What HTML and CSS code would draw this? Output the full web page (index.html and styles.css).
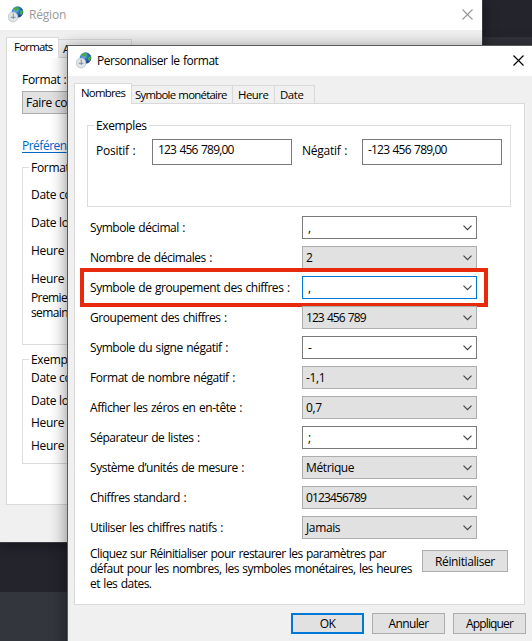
FILE: index.html
```html
<!DOCTYPE html>
<html lang="fr">
<head>
<meta charset="utf-8">
<title>Région</title>
<link rel="stylesheet" href="styles.css">
</head>
<body>
<svg class="defs" width="0" height="0">
  <defs>
    <radialGradient id="sea" cx="35%" cy="30%" r="75%"><stop offset="0" stop-color="#8fd0f5"/><stop offset=".45" stop-color="#2f74d0"/><stop offset="1" stop-color="#0c2f8c"/></radialGradient>
    <symbol id="globe" viewBox="0 0 16 17">
      <circle cx="9.5" cy="6" r="5.8" fill="url(#sea)"/>
      <path d="M5.500 2.500Q8 .2 10 1L11 2.500 9 4.500 7.500 5 6 4ZM12.500 4.500L15 4.200Q15.500 7.500 13.200 9.800L11.800 7.500Z" fill="#43ad3d"/>
      <circle cx="5" cy="11" r="4.900" fill="#dfe5e8" stroke="#b4bdc3" stroke-width=".7"/>
      <path d="M5.300 7.500V13M2.700 11.300H7.500" fill="none" stroke="#7b8790" stroke-width=".9"/>
    </symbol>
    <symbol id="cross" viewBox="0 0 11 11"><path d="M.5 .5L10.500 10.500M10.500 .5L.5 10.500" fill="none" stroke="currentColor" stroke-width="1.150"/></symbol>
    <symbol id="chev" viewBox="0 0 9 6"><path d="M.5 .7L4.500 4.700 8.500 .7" fill="none" stroke="currentColor" stroke-width="1.200"/></symbol>
  </defs>
</svg>
<main class="desktop">
  <section class="window region">
    <header class="titlebar"><svg class="app-icon"><use href="#globe"/></svg><span class="title">Région</span><svg class="close"><use href="#cross"/></svg></header>
    <nav class="tabs"><span class="tab active">Formats</span><span class="tab">Administration</span></nav>
    <div class="panel">
      <div class="caption">Format :</div>
      <div class="select-back">Faire co</div>
      <a class="link">Préféren</a>
      <div class="group formats">
        <div class="legend">Format</div>
        <p>Date co</p><p>Date lo</p><p>Heure c</p><p>Heure l</p>
        <p class="two">Premie<br>semain</p>
      </div>
      <div class="group samples">
        <div class="legend">Exemp</div>
        <p>Date co</p><p>Date lo</p><p>Heure c</p><p>Heure l</p>
      </div>
    </div>
  </section>

  <section class="window customize">
    <header class="titlebar"><svg class="app-icon"><use href="#globe"/></svg><span class="title">Personnaliser le format</span><svg class="close"><use href="#cross"/></svg></header>
    <nav class="tabs"><span class="tab active">Nombres</span><span class="tab wide">Symbole monétaire</span><span class="tab hour">Heure</span><span class="tab date">Date</span></nav>
    <div class="panel">
      <div class="group examples">
        <div class="legend">Exemples</div>
        <div class="fields"><span class="lab pos">Positif :</span><span class="field">123 456 789,00</span><span class="lab neg">Négatif :</span><span class="field">-123 456 789,00</span></div>
      </div>
      <div class="rows">
        <div class="row"><span>Symbole décimal :</span><div class="combo edit"><b>,</b><svg><use href="#chev"/></svg></div></div>
        <div class="row"><span>Nombre de décimales :</span><div class="combo"><b>2</b><svg><use href="#chev"/></svg></div></div>
        <div class="row marked"><span>Symbole de groupement des chiffres :</span><div class="combo edit focus"><b>,</b><svg><use href="#chev"/></svg></div></div>
        <div class="row"><span>Groupement des chiffres :</span><div class="combo"><b class="num">123 456 789</b><svg><use href="#chev"/></svg></div></div>
        <div class="row"><span>Symbole du signe négatif :</span><div class="combo edit"><b>-</b><svg><use href="#chev"/></svg></div></div>
        <div class="row"><span>Format de nombre négatif :</span><div class="combo"><b>-1,1</b><svg><use href="#chev"/></svg></div></div>
        <div class="row"><span>Afficher les zéros en en-tête :</span><div class="combo"><b>0,7</b><svg><use href="#chev"/></svg></div></div>
        <div class="row"><span>Séparateur de listes :</span><div class="combo edit"><b>;</b><svg><use href="#chev"/></svg></div></div>
        <div class="row"><span>Système d’unités de mesure :</span><div class="combo"><b>Métrique</b><svg><use href="#chev"/></svg></div></div>
        <div class="row"><span>Chiffres standard :</span><div class="combo"><b class="digits">0123456789</b><svg><use href="#chev"/></svg></div></div>
        <div class="row"><span>Utiliser les chiffres natifs :</span><div class="combo"><b>Jamais</b><svg><use href="#chev"/></svg></div></div>
      </div>
      <div class="reset"><div><p class="first">Cliquez sur Réinitialiser pour restaurer les paramètres par</p><p>défaut pour les nombres, les symboles monétaires, les heures</p><p>et les dates.</p></div><div class="button">Réinitialiser</div></div>
    </div>
    <footer class="actions"><div class="button default">OK</div><div class="button">Annuler</div><div class="button">Appliquer</div></footer>
  </section>
</main>
</body>
</html>
```
FILE: styles.css
```css
*, *::after { box-sizing: border-box; }
body { margin: 0; font: 12px/15px "Open Sans", "Noto Sans", sans-serif; letter-spacing: -0.37px; word-spacing: 0.8px; color: #000; }
p { margin: 0; }
b { font-weight: 400; }
.defs { position: absolute; }
.desktop { position: relative; width: 532px; height: 641px; overflow: hidden; background: linear-gradient(#24242d 37px, #32333a 37px 80px, #24242d 80px 592px, #33363d 592px); white-space: nowrap; }
.window { position: absolute; background: #f0f0f0; }
.region { left: 0; top: 0; width: 483px; height: 543px; border-right: 1px solid #3b3c42; border-bottom: 1px solid #3b3c42; box-shadow: 0 2px 12px rgba(0,0,0,.45); letter-spacing: -0.3px; word-spacing: 0; }
.customize { left: 67px; top: 45px; width: 470px; height: 610px; border: 1px solid #5b5b5e; box-shadow: 0 3px 16px rgba(0,0,0,.48); }
.titlebar { display: flex; align-items: center; height: 30px; background: #fff; padding-left: 8px; }
.app-icon { width: 16px; height: 17px; margin-top: -2px; }
.title { margin-left: 5px; margin-top: -1px; letter-spacing: -0.48px; }
.close { width: 11px; height: 11px; margin-left: auto; }
.region .title, .region .close { color: #999; }
.region .title { letter-spacing: -0.2px; }
.region .close { margin-right: 9px; margin-top: -2px; }
.customize .close { margin-right: 12px; margin-top: -2px; }
.tabs { display: flex; align-items: flex-end; position: relative; padding-left: 6px; margin-top: 7px; height: 20px; font-size: 11.4px; letter-spacing: -0.75px; }
.tab { height: 18px; border: 1px solid #d9d9d9; border-left: 0; border-bottom: 0; padding: 1px 3px 0; }
.tab.active { height: 21px; margin-bottom: -1px; background: #fff; border-left: 1px solid #d9d9d9; padding: 1px 7px 0; z-index: 1; }
.panel { background: #fff; border: 1px solid #d9d9d9; }
.region .tab.active { width: 53px; }
.region .tab { width: 73px; padding-left: 4px; }
.region .panel { margin: 0 7px 0 6px; height: 448px; padding: 14px 15px 0; }
.region .tab.active { padding-left: 7px; }
.caption { letter-spacing: -0.3px; }
.select-back { height: 23px; margin: 4px 0 24px; border: 1px solid #adadad; background: #e1e1e1; padding: 3px 3px; }
.link { display: block; color: #0066cc; text-decoration: underline; text-underline-offset: 2px; letter-spacing: -0.5px; }
.group { border: 1px solid #dcdcdc; }
.legend { width: fit-content; height: 15px; margin: -8px 0 0 6px; padding: 0 2px; background: #fff; }
.group p { margin-left: 8px; }
.formats { height: 178px; margin-top: 14px; }
.formats p { margin-top: 13px; }
.formats .legend + p { margin-top: 12px; }
.formats p.two { margin-top: 4px; letter-spacing: -0.6px; }
.samples { height: 105px; margin-top: 14px; }
.samples p { margin-top: 7.6px; }
.samples .legend + p { margin-top: 3px; }
.customize .tab.active { width: 58px; padding-left: 6px; }
.customize .wide { width: 101px; }
.customize .hour { width: 42px; padding-left: 5px; letter-spacing: -0.5px; }
.customize .date { width: 40px; padding-left: 5px; letter-spacing: -0.4px; }
.customize .panel { margin: 0 0 0 6px; width: 451px; height: 502px; padding: 21px 13px 0 12px; }
.examples { width: 424px; height: 82px; }
.fields { display: flex; padding-left: 8px; margin-top: 6px; }
.lab { padding-top: 4px; letter-spacing: -0.25px; }
.pos { width: 56px; }
.neg { width: 70px; padding-left: 10px; }
.field { width: 140px; height: 26px; border: 1px solid #7a7a7a; padding: 2px 5px; letter-spacing: -0.8px; word-spacing: 1px; }
.rows { display: flex; flex-direction: column; gap: 7px; margin: 9px 0 0 3px; }
.row { display: flex; align-items: center; justify-content: space-between; width: 387px; height: 23px; position: relative; }
.row > span { margin-top: -1px; letter-spacing: -0.45px; }
.num { letter-spacing: -0.95px; word-spacing: 1px; }
.digits { letter-spacing: -0.85px; }
.combo { display: flex; align-items: center; justify-content: space-between; width: 175px; height: 23px; border: 1px solid #adadad; background: #e1e1e1; padding: 0 4px 0 3px; }
.combo svg { width: 9px; height: 6px; color: #444; margin-top: 1px; }
.edit { background: #fff; border-color: #7a7a7a; padding-left: 5px; }
.focus { border-color: #0078d7; }
.marked::after { content: ""; position: absolute; left: -10px; top: -8px; width: 408px; height: 39px; border: 4px solid #e62a0b; }
.reset { display: flex; justify-content: space-between; margin: 7px 0 0 3px; letter-spacing: -0.52px; }
.first { letter-spacing: -0.57px; }
.button { display: flex; flex: none; align-items: center; justify-content: center; width: 73px; height: 21px; border: 1px solid #adadad; background: #e1e1e1; letter-spacing: -0.65px; }
.reset .button { width: 86px; height: 22px; margin: 4px 3px 0 0; letter-spacing: -0.4px; }
.actions { display: flex; gap: 8px; margin: 8px 0 0 223px; }
.actions .button:last-child { letter-spacing: -0.85px; }
.default { border: 2px solid #0078d7; }
```
